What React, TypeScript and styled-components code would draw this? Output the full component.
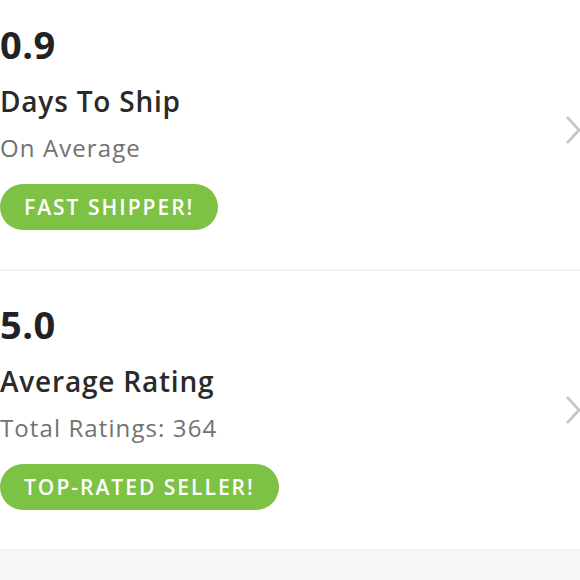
import React from "react";
import styled, { createGlobalStyle } from "styled-components";

const GlobalStyle = createGlobalStyle`
  html, body {
    margin: 0;
    padding: 0;
    background: #ffffff;
    overflow: hidden;
  }
  body {
    font-family: "Open Sans", Lato, Arial, sans-serif;
    color: #222222;
  }
`;

interface Stat {
  value: string;
  title: string;
  subtitle: string;
  badge: string;
}

const stats: Stat[] = [
  { value: "0.9", title: "Days To Ship", subtitle: "On Average", badge: "FAST SHIPPER!" },
  { value: "5.0", title: "Average Rating", subtitle: "Total Ratings: 364", badge: "TOP-RATED SELLER!" },
];

function Chevron() {
  return (
    <svg width="15" height="30" viewBox="0 0 15 30" fill="none">
      <path d="M2 2 L14 15 L2 28" stroke="#c6c6c6" strokeWidth="3" strokeLinecap="round" strokeLinejoin="round" />
    </svg>
  );
}

export default function App() {
  return (
    <>
      <GlobalStyle />
      <Page>
        {stats.map((s) => (
          <StatRow key={s.value}>
            <StatBody>
              <Value>{s.value}</Value>
              <Title>{s.title}</Title>
              <Subtitle>{s.subtitle}</Subtitle>
              <Badge>{s.badge}</Badge>
            </StatBody>
            <ChevronSlot>
              <Chevron />
            </ChevronSlot>
          </StatRow>
        ))}
        <Footer />
      </Page>
    </>
  );
}

const Page = styled.div`
  width: 580px;
  margin-top: -9px;
  display: flex;
  flex-direction: column;
`;

const StatRow = styled.div`
  height: 280px;
  box-sizing: border-box;
  display: flex;
  align-items: center;
  border-bottom: 2px solid #f1f1f1;
`;

const StatBody = styled.div`
  flex: 1;
  align-self: flex-start;
  display: flex;
  flex-direction: column;
  align-items: flex-start;
  padding-top: 33px;
`;

const Value = styled.div`
  font-size: 38px;
  font-weight: 700;
  line-height: 40px;
  letter-spacing: 0.5px;
  color: #222222;
`;

const Title = styled.div`
  margin-top: 20px;
  font-size: 28px;
  font-weight: 600;
  line-height: 34px;
  letter-spacing: 0.8px;
  color: #2a2a2a;
`;

const Subtitle = styled.div`
  margin-top: 15px;
  font-size: 24px;
  font-weight: 400;
  line-height: 30px;
  letter-spacing: 1.1px;
  color: #727272;
`;

const Badge = styled.div`
  margin-top: 21px;
  height: 46px;
  padding: 0 24px;
  display: flex;
  align-items: center;
  border-radius: 23px;
  background: #7dc244;
  color: #ffffff;
  font-size: 21px;
  font-weight: 600;
  letter-spacing: 2px;
`;

const ChevronSlot = styled.div`
  width: 14px;
  display: flex;
`;

const Footer = styled.div`
  height: 40px;
  background: #f8f8f8;
`;
